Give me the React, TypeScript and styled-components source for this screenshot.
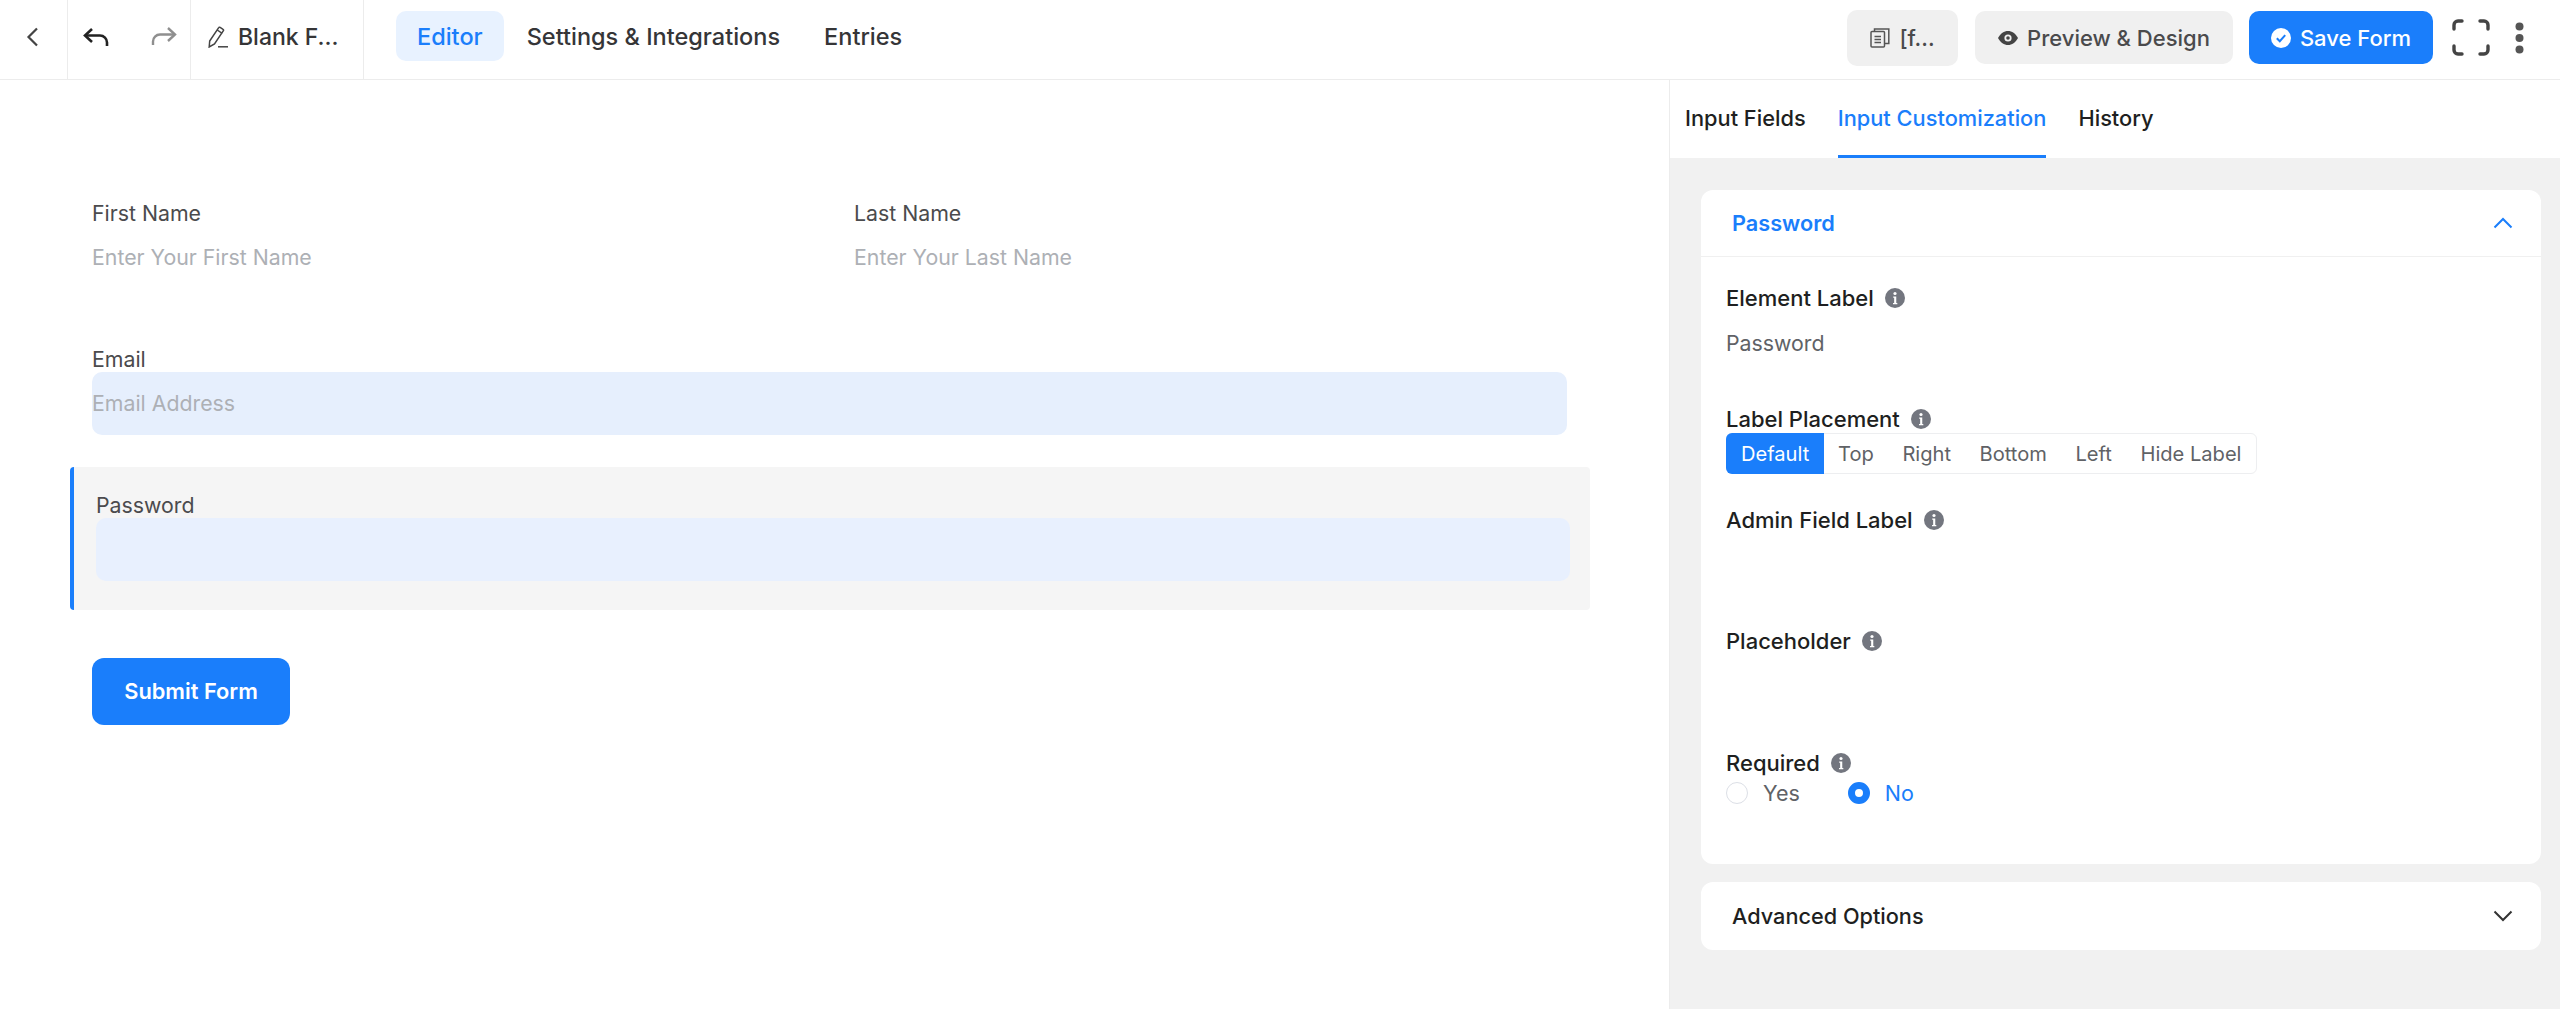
import { createGlobalStyle, styled } from "styled-components";

const GlobalStyle = createGlobalStyle`
  * { box-sizing: border-box; }
  html, body { margin: 0; padding: 0; background: #fff; }
  body { font-family: Inter, "Liberation Sans", sans-serif; color: #1e1f21; }
`;

const Page = styled.div`
  width: 2560px;
  height: 1009px;
  display: flex;
  flex-direction: column;
  overflow: hidden;
`;

const TopBar = styled.header`
  height: 80px;
  flex: none;
  display: flex;
  align-items: stretch;
  border-bottom: 1px solid #ececec;
`;

const BarCell = styled.div<{ $width: number }>`
  width: ${(p) => p.$width}px;
  flex: none;
  display: flex;
  align-items: center;
  padding-bottom: 6px;
  border-right: 1px solid #ececec;
`;

const BackButton = styled(BarCell)`
  padding-left: 26px;
  color: #444;
`;

const HistoryButtons = styled(BarCell)`
  padding-left: 15px;
  gap: 42px;
`;

const FormName = styled(BarCell)`
  padding-left: 17px;
  gap: 10px;
  font-size: 23px;
  font-weight: 500;
  color: #353537;
`;

const Nav = styled.nav`
  display: flex;
  align-items: center;
  gap: 2px;
  margin-left: 32px;
  padding-bottom: 7px;
`;

const NavItem = styled.a<{ $active?: boolean }>`
  height: 50px;
  display: flex;
  align-items: center;
  padding: 0 21px;
  border-radius: 10px;
  font-size: 23.5px;
  font-weight: 500;
  color: ${(p) => (p.$active ? "#1a7efb" : "#353537")};
  background: ${(p) => (p.$active ? "#e8f2ff" : "transparent")};
`;

const BarActions = styled.div`
  margin-left: auto;
  display: flex;
  align-items: center;
  padding-bottom: 4px;
`;

const ActionButton = styled.button<{ $primary?: boolean; $width: number }>`
  width: ${(p) => p.$width}px;
  height: 53px;
  margin-right: 16px;
  display: flex;
  align-items: center;
  justify-content: center;
  gap: 9px;
  border: 0;
  border-radius: 10px;
  font: 500 22px Inter, "Liberation Sans", sans-serif;
  color: ${(p) => (p.$primary ? "#fff" : "#4a4a4c")};
  background: ${(p) => (p.$primary ? "#1a7efb" : "#f0f0f0")};
`;

const ShortcutButton = styled(ActionButton)`
  height: 56px;
  margin-right: 17px;
`;

const IconSlot = styled.span`
  display: flex;
  margin-left: 3px;
`;

const DotsSlot = styled.span`
  display: flex;
  margin: 0 36px 0 25px;
`;

const Body = styled.main`
  flex: 1;
  display: flex;
  min-height: 0;
`;

const Canvas = styled.section`
  flex: 1;
  padding: 120px 102px 0 92px;
`;

const NameRow = styled.div`
  display: grid;
  grid-template-columns: 713px 713px;
  gap: 49px;
  margin-bottom: 57px;
`;

const FieldLabel = styled.div`
  height: 26px;
  line-height: 26.5px;
  font-size: 21.3px;
  color: #4b4b4d;
`;

const FieldInput = styled.div<{ $autofill?: boolean; $filled?: boolean }>`
  height: 63px;
  display: flex;
  align-items: center;
  padding-bottom: 1px;
  font-size: 21.3px;
  color: #adb0b5;
  border-radius: 10px;
  background: ${(p) => (p.$autofill ? "#e8f0fe" : p.$filled ? "#e6effd" : "transparent")};
`;

const SelectedField = styled.div`
  margin: 32px -23px 0 -22px;
  padding: 25px 20px 29px 22px;
  border-left: 4px solid #1a7efb;
  border-radius: 4px;
  background: #f5f5f5;
`;

const SubmitButton = styled.button`
  display: block;
  width: 198px;
  height: 67px;
  margin-top: 48px;
  padding-bottom: 2px;
  border: 0;
  border-radius: 12px;
  font: 600 21.8px Inter, "Liberation Sans", sans-serif;
  color: #fff;
  background: #1a7efb;
`;

const Sidebar = styled.aside`
  width: 891px;
  flex: none;
  display: flex;
  flex-direction: column;
  border-left: 1px solid #ececec;
`;

const Tabs = styled.div`
  height: 78px;
  flex: none;
  display: flex;
  gap: 32px;
  padding-left: 15px;
`;

const Tab = styled.a<{ $active?: boolean }>`
  display: flex;
  align-items: center;
  font-size: 21.8px;
  font-weight: 500;
  color: ${(p) => (p.$active ? "#1a7efb" : "#1e1f21")};
  border-bottom: 3px solid ${(p) => (p.$active ? "#1a7efb" : "transparent")};
`;

const SidebarBody = styled.div`
  flex: 1;
  padding: 32px 19px 0 31px;
  background: #f1f1f1;
`;

const Card = styled.div`
  border-radius: 12px;
  background: #fff;
`;

const CardHeader = styled.div<{ $open?: boolean }>`
  height: ${(p) => (p.$open ? 67 : 68)}px;
  display: flex;
  align-items: center;
  justify-content: space-between;
  padding: 0 28px 0 31px;
  font-size: 21.7px;
  font-weight: ${(p) => (p.$open ? 600 : 500)};
  color: ${(p) => (p.$open ? "#1a7efb" : "#1e1f21")};
  ${(p) => p.$open && "border-bottom: 1px solid #f0f0f0;"}
`;

const CardContent = styled.div`
  height: 607px;
  padding: 28px 25px 0;
`;

const Setting = styled.div<{ $height: number }>`
  height: ${(p) => p.$height}px;
`;

const SettingLabel = styled.div`
  height: 26px;
  display: flex;
  align-items: center;
  gap: 11px;
  font-size: 22px;
  font-weight: 500;
  color: #1e1f21;
`;

const SettingValue = styled.div`
  height: 26px;
  line-height: 26.5px;
  margin-top: 19px;
  font-size: 21.3px;
  color: #606266;
`;

const Segments = styled.div`
  display: inline-flex;
  height: 41px;
  margin-top: 1px;
  border: 1px solid #edeef0;
  border-radius: 6px;
`;

const Segment = styled.span<{ $active?: boolean }>`
  display: flex;
  align-items: center;
  padding: 0 ${(p) => (p.$active ? 15 : 14.8)}px;
  margin: -1px 0 -1px -1px;
  border-radius: ${(p) => (p.$active ? "6px 0 0 6px" : "0")};
  font-size: 20.1px;
  color: ${(p) => (p.$active ? "#fff" : "#606266")};
  background: ${(p) => (p.$active ? "#1a7efb" : "transparent")};
`;

const RadioRow = styled.div`
  display: flex;
  align-items: center;
  gap: 48px;
  margin-top: 3px;
`;

const RadioOption = styled.label<{ $checked?: boolean }>`
  display: flex;
  align-items: center;
  gap: 15px;
  height: 28px;
  font-size: 21.5px;
  color: ${(p) => (p.$checked ? "#1a7efb" : "#606266")};
`;

const RadioDot = styled.span<{ $checked?: boolean }>`
  width: 22px;
  height: 22px;
  border-radius: 50%;
  border: ${(p) => (p.$checked ? "7px solid #1a7efb" : "1px solid #dcdfe6")};
  background: #fff;
`;

const AdvancedCard = styled(Card)`
  margin-top: 18px;
`;

const Info = () => (
  <svg width="20" height="20" viewBox="0 0 19 19" aria-hidden="true">
    <circle cx="9.5" cy="9.5" r="9.5" fill="#73767f" />
    <circle cx="9.5" cy="5.2" r="1.5" fill="#fff" />
    <path d="M7.8 8h2.9v6.2h1v1.2H7.6v-1.2h1.1V9.2h-.9z" fill="#fff" />
  </svg>
);

const Chevron = ({ up, color }: { up?: boolean; color: string }) => (
  <svg width="20" height="12" viewBox="0 0 20 12" fill="none" stroke={color} strokeWidth="2">
    <path d={up ? "M1.5 10.5 10 2l8.5 8.5" : "M1.5 1.5 10 10l8.5-8.5"} />
  </svg>
);

export default function App() {
  return (
    <Page>
      <GlobalStyle />
      <TopBar>
        <BackButton $width={68}>
          <svg width="13" height="20" viewBox="0 0 13 20" fill="none" stroke="#444" strokeWidth="2.2">
            <path d="M11 1.5 2.500 10l8.500 8.500" />
          </svg>
        </BackButton>
        <HistoryButtons $width={123}>
          <svg width="26" height="20" viewBox="0 0 26 20" fill="none" stroke="#222" strokeWidth="2.6">
            <path d="M9 2 2 8.500 9 15" />
            <path d="M2 8.500h15a7 7 0 0 1 7 7V19" />
          </svg>
          <svg width="26" height="20" viewBox="0 0 26 20" fill="none" stroke="#8f8f8f" strokeWidth="2.4">
            <path d="M17 1l7 6.500L17 14" />
            <path d="M24 7.500H9a7 7 0 0 0-7 7V18" />
          </svg>
        </HistoryButtons>
        <FormName $width={173}>
          <svg width="20" height="22" viewBox="0 0 20 22" fill="none" stroke="#444" strokeWidth="1.5">
            <path d="M1.700 15 10.700 1.600a1 1 0 0 1 1.400-.3l3 2a1 1 0 0 1 .3 1.400L6.500 18l-5.300 3z" />
            <path d="M9.200 4l5 3.400" />
            <path d="M10 20.800h10" />
          </svg>
          Blank F...
        </FormName>
        <Nav>
          <NavItem $active>Editor</NavItem>
          <NavItem>Settings &amp; Integrations</NavItem>
          <NavItem>Entries</NavItem>
        </Nav>
        <BarActions>
          <ShortcutButton $width={111}>
            <svg width="20" height="20" viewBox="0 0 20 20" fill="none" stroke="#555" strokeWidth="1.5">
              <rect x="1" y="3.500" width="13.500" height="15.500" rx="1" />
              <path d="M4.500 3.500V1h14.300v14.500h-4.300" />
              <path d="M4.500 8.500h6.500M4.500 11.500h6.500M4.500 14.500h6.500" />
            </svg>
            [f...
          </ShortcutButton>
          <ActionButton $width={258}>
            <svg width="20" height="14" viewBox="0 0 20 14">
              <path d="M0 7C2.500 2.500 6 0 10 0s7.500 2.500 10 7c-2.500 4.500-6 7-10 7S2.500 11.500 0 7z" fill="#444" />
              <circle cx="10" cy="7" r="3.600" fill="#f0f0f0" />
              <circle cx="10" cy="7" r="1.800" fill="#444" />
            </svg>
            Preview &amp; Design
          </ActionButton>
          <ActionButton $primary $width={184}>
            <svg width="20" height="20" viewBox="0 0 20 20">
              <circle cx="10" cy="10" r="10" fill="#fff" />
              <path d="M5.800 10.200l3 3 5.400-6" fill="none" stroke="#1a7efb" strokeWidth="2" />
            </svg>
            Save Form
          </ActionButton>
          <IconSlot>
            <svg width="38" height="37" viewBox="0 0 38 37" fill="none" stroke="#444" strokeWidth="3.400" strokeLinecap="round">
              <path d="M2 10V6a4 4 0 0 1 4-4h4" />
              <path d="M28 2h4a4 4 0 0 1 4 4v4" />
              <path d="M2 27v4a4 4 0 0 0 4 4h4" />
              <path d="M36 27v4a4 4 0 0 1-4 4h-4" />
            </svg>
          </IconSlot>
          <DotsSlot>
            <svg width="9" height="32" viewBox="0 0 9 32" fill="#555">
              <circle cx="4.500" cy="4.500" r="4" />
              <circle cx="4.500" cy="16" r="4" />
              <circle cx="4.500" cy="27.500" r="4" />
            </svg>
          </DotsSlot>
        </BarActions>
      </TopBar>
      <Body>
        <Canvas>
          <NameRow>
            <div>
              <FieldLabel>First Name</FieldLabel>
              <FieldInput>Enter Your First Name</FieldInput>
            </div>
            <div>
              <FieldLabel>Last Name</FieldLabel>
              <FieldInput>Enter Your Last Name</FieldInput>
            </div>
          </NameRow>
          <FieldLabel>Email</FieldLabel>
          <FieldInput $filled>Email Address</FieldInput>
          <SelectedField>
            <FieldLabel>Password</FieldLabel>
            <FieldInput $autofill />
          </SelectedField>
          <SubmitButton>Submit Form</SubmitButton>
        </Canvas>
        <Sidebar>
          <Tabs>
            <Tab>Input Fields</Tab>
            <Tab $active>Input Customization</Tab>
            <Tab>History</Tab>
          </Tabs>
          <SidebarBody>
            <Card>
              <CardHeader $open>
                Password
                <Chevron up color="#1a7efb" />
              </CardHeader>
              <CardContent>
                <Setting $height={121}>
                  <SettingLabel>
                    Element Label <Info />
                  </SettingLabel>
                  <SettingValue>Password</SettingValue>
                </Setting>
                <Setting $height={101}>
                  <SettingLabel>
                    Label Placement <Info />
                  </SettingLabel>
                  <Segments>
                    <Segment $active>Default</Segment>
                    <Segment>Top</Segment>
                    <Segment>Right</Segment>
                    <Segment>Bottom</Segment>
                    <Segment>Left</Segment>
                    <Segment>Hide Label</Segment>
                  </Segments>
                </Setting>
                <Setting $height={121}>
                  <SettingLabel>
                    Admin Field Label <Info />
                  </SettingLabel>
                </Setting>
                <Setting $height={122}>
                  <SettingLabel>
                    Placeholder <Info />
                  </SettingLabel>
                </Setting>
                <Setting $height={100}>
                  <SettingLabel>
                    Required <Info />
                  </SettingLabel>
                  <RadioRow>
                    <RadioOption>
                      <RadioDot />
                      Yes
                    </RadioOption>
                    <RadioOption $checked>
                      <RadioDot $checked />
                      No
                    </RadioOption>
                  </RadioRow>
                </Setting>
              </CardContent>
            </Card>
            <AdvancedCard>
              <CardHeader>
                Advanced Options
                <Chevron color="#333" />
              </CardHeader>
            </AdvancedCard>
          </SidebarBody>
        </Sidebar>
      </Body>
    </Page>
  );
}
